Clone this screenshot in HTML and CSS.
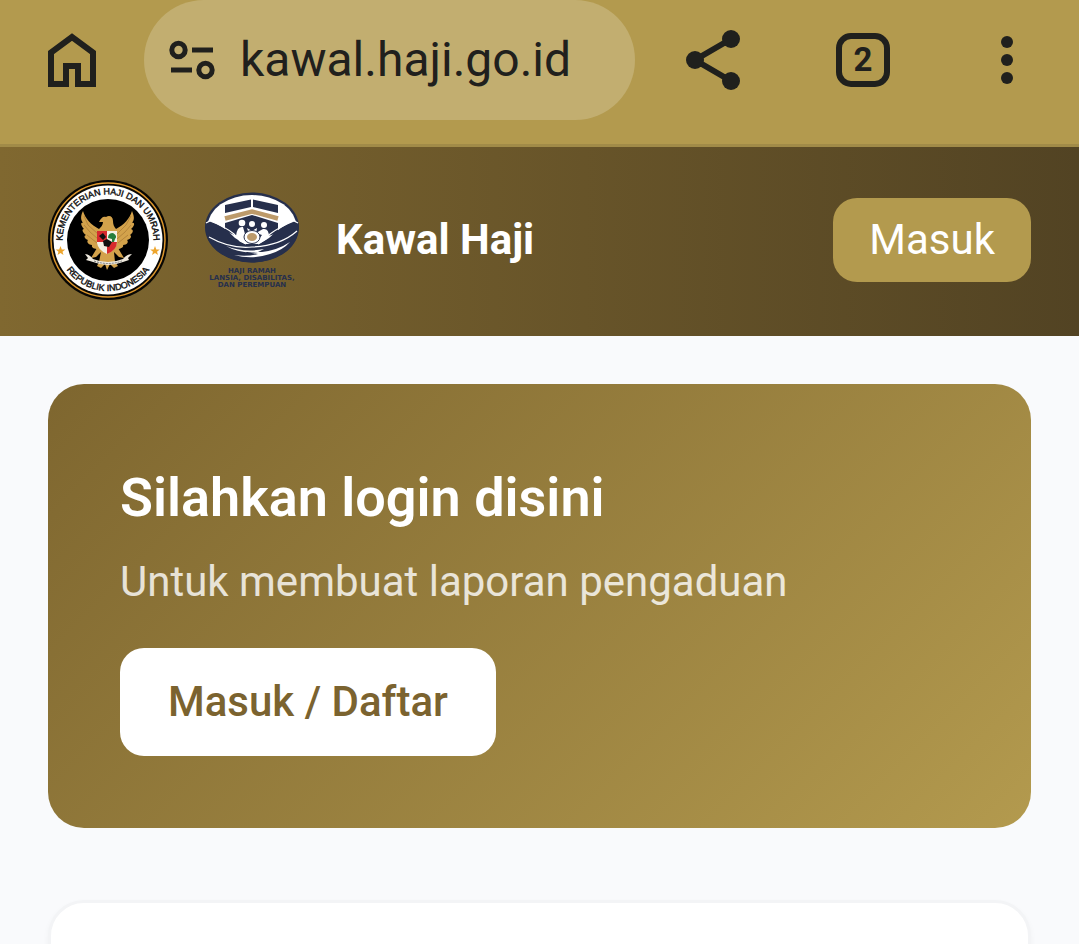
FILE: index.html
```html
<!DOCTYPE html>
<html lang="id">
<head>
<meta charset="utf-8">
<meta name="viewport" content="width=device-width, initial-scale=1">
<title>Kawal Haji</title>
<link rel="stylesheet" href="styles.css">
</head>
<body>
<div class="browser">
	<button class="tool" type="button" aria-label="Beranda">
		<svg width="72" height="72" viewBox="0 0 72 72"><path d="M15 60V28.500L36 13L57 28.500V60H42V42H30V60Z" fill="none" stroke="#20201d" stroke-width="6"/></svg>
	</button>
	<div class="omnibox">
		<button type="button" aria-label="Info situs">
			<svg width="48" height="48" viewBox="0 0 48 48" fill="none" stroke="#20201d" stroke-width="5">
				<circle cx="10.500" cy="14" r="6.700"/><path d="M24 14H45M3 34H24"/><circle cx="37.500" cy="34" r="6.700"/>
			</svg>
		</button>
		<input type="text" aria-label="Alamat" value="kawal.haji.go.id">
	</div>
	<button class="tool share" type="button" aria-label="Bagikan">
		<svg width="72" height="72" viewBox="0 0 72 72" fill="#20201d">
			<path d="M54 15L18 36L54 57" fill="none" stroke="#20201d" stroke-width="6"/>
			<circle cx="54" cy="15" r="9"/><circle cx="18" cy="36" r="9"/><circle cx="54" cy="57" r="9"/>
		</svg>
	</button>
	<button class="tool" type="button" aria-label="Tab"><span class="tabs">2</span></button>
	<button class="tool" type="button" aria-label="Menu">
		<svg width="72" height="72" viewBox="0 0 72 72" fill="#20201d"><circle cx="36" cy="18" r="6"/><circle cx="36" cy="36" r="6"/><circle cx="36" cy="54" r="6"/></svg>
	</button>
</div>

<header class="header">
	<svg class="logo" viewBox="0 0 120 120" role="img" aria-label="Kementerian Haji dan Umrah">
		<defs>
			<path id="arcTop" d="M14.500 70V60A45.500 45.500 0 0 1 105.500 60V70"/>
			<path id="arcBottom" d="M9 60A51 51 0 0 0 111 60"/>
			<path id="star" d="M0 -5L1.300 -1.600L4.800 -1.500L2 .700L3 4L0 2L-3 4L-2 .700L-4.800 -1.500L-1.300 -1.600Z"/>
		</defs>
		<circle cx="60" cy="60" r="60" fill="#080704"/>
		<circle cx="60" cy="60" r="57" fill="none" stroke="#dc962d" stroke-width="1.500"/>
		<circle cx="60" cy="60" r="54.500" fill="#fff"/>
		<circle cx="60" cy="60" r="41" fill="#000"/>
		<g class="ring">
			<text><textPath href="#arcTop" startOffset="50%" text-anchor="middle">KEMENTERIAN HAJI DAN UMRAH</textPath></text>
			<text><textPath href="#arcBottom" startOffset="50%" text-anchor="middle">REPUBLIK INDONESIA</textPath></text>
		</g>
		<use href="#star" x="12.500" y="71" fill="#eda52d"/>
		<use href="#star" x="107" y="71" fill="#eda52d"/>
		<!-- garuda -->
		<g fill="#d3a24b">
			<path d="M51 49C43 45 37 38 35 31C32 37 33 40 35 43C32 42 33 46 36 49C33 49 35 53 38 55C35 56 37 59 40 60C38 62 41 65 44 65C43 68 47 69 50 69L54 73H64L69 69C73 69 76 67 75 65C79 65 81 62 79 60C83 59 84 56 82 55C85 53 86 50 83 49C87 46 87 42 84 43C87 39 86 36 84 31C82 38 76 45 68 49C66 47 65 44 65 41C65 36 61 35 58 37C55 36 53 38 51 42L55 42C55 45 53 47 51 49Z"/>
			<path d="M49 68L43 78L48 77L53 72L51 82L49 86L53 88L57 84L59 90L62 84L66 88L70 86L67 82L66 72L71 77L76 78L70 68Z"/>
		</g>
		<path d="M36 36L40 45L50 54M36 45L42 52L50 59M39 55L49 63M83 36L78 45L69 54M83 45L77 52L69 59M80 55L70 63" fill="none" stroke="#b5853b"/>
		<path d="M49 51H69V63Q68 70 59 74Q50 70 49 63Z" fill="#f3efe3"/>
		<path d="M49 51H59V62H49ZM59 62H69Q69 70 59 74Z" fill="#d7292d"/>
		<path d="M60 58Q60 53 65 53Q70 56 67 59L66 62H64V59Z" fill="#267e3d"/>
		<path d="M51 56L55 53L58 57L55 60ZM55 61L59 59L64 62L61 67L56 66Z" fill="#111"/>
		<path d="M37 74Q41 74 45 79Q60 85 75 79Q79 74 84 74L80 78L81 80Q78 81 75 82Q60 88 45 82Q42 81 38 80L40 78Z" fill="#eee9de"/>
		<path d="M46 81Q60 86 74 81" fill="none" stroke="#777" stroke-dasharray="2 1"/>
	</svg>
	<svg class="logo" viewBox="0 0 120 120" role="img" aria-label="Haji ramah lansia, disabilitas, dan perempuan">
		<ellipse cx="60" cy="47.500" rx="47" ry="35" fill="#262f4c"/>
		<ellipse cx="60" cy="47" rx="44.500" ry="32" fill="#fff"/>
		<!-- kabah -->
		<path d="M33 25L59 19.500V27L33 33ZM61 19.500L86 25V33L61 27ZM33 43L60 35L86 43V53L73 57L60 59L45 56L33 51Z" fill="#262f4c"/>
		<path d="M33 38.500L60 31.500L86 38.500" fill="none" stroke="#bc9a6a" stroke-width="4.500"/>
		<!-- tangan -->
		<path d="M14 43L18 41Q32 46 43 58L53 64H67L77 58Q89 46 102 41L106 43Q109 58 95 71Q80 82.500 60 82.500Q40 82.500 25 71Q11 58 14 43Z" fill="#262f4c"/>
		<path d="M14 43L18 41Q32 46 42 54L48 61L54 64M66 64L74 59L78 54Q89 46 102 41L106 43M17 57Q38 69 60 67Q88 66 105 51" fill="none" stroke="#fff" stroke-width="1.200"/>
		<path d="M34 66Q52 73 72 69L66 72Q48 74 34 66ZM42 75Q60 80 78 74Q91 70 98 62Q86 70 70 72L54 72L66 74Q55 77 42 75Z" fill="#fff"/>
		<g fill="#fff">
			<circle cx="50" cy="43" r="3.300"/><circle cx="60" cy="44" r="3"/><circle cx="72" cy="45" r="3"/>
			<path d="M44 56Q45 46 51 47L53 54L55 57L52 60L48 58ZM77 57Q77 48 71 49L64 53L70 55L67 59L72 58ZM55 48L60 51L65 48L64 54H57Z"/>
		</g>
		<ellipse cx="60" cy="57" rx="8" ry="6.500" fill="#fff" stroke="#262f4c"/>
		<ellipse cx="60" cy="57" rx="5" ry="4" fill="#bc9a6a"/>
		<g class="caption">
			<text x="60" y="93">HAJI RAMAH</text>
			<text x="60" y="100">LANSIA, DISABILITAS,</text>
			<text x="60" y="107">DAN PEREMPUAN</text>
		</g>
	</svg>
	<h1>Kawal Haji</h1>
	<button class="login" type="button">Masuk</button>
</header>

<main>
	<section class="hero">
		<h2>Silahkan login disini</h2>
		<p>Untuk membuat laporan pengaduan</p>
		<a class="btn" href="#masuk">Masuk / Daftar</a>
	</section>
	<section class="card"></section>
</main>
</body>
</html>
```

FILE: styles.css
```css
*{box-sizing:border-box;}
body{margin:0;background:#f9fafc;font-family:Roboto, "Liberation Sans", sans-serif;font-size:42px;line-height:60px;}
button{padding:0;border:0;background:none;font:inherit;cursor:pointer;}
svg{display:block;flex:none;}
h1,h2,p{margin:0;}

/* browser bar */
.browser{display:flex;height:147px;background:#b39a4e;border-bottom:3px solid #a18b48;}
.tool{display:flex;flex:none;width:144px;height:120px;align-items:center;justify-content:center;}
.share{width:156px;}
.omnibox{display:flex;flex:1;min-width:0;height:120px;padding:0 24px;gap:24px;align-items:center;border-radius:60px;background:#c2ae70;}
.omnibox input{flex:1;width:0;min-width:0;height:72px;padding:0;border:0;outline:0;background:none;color:#20201d;font:48px/72px Roboto, sans-serif;}
.tabs{width:54px;height:54px;border:6px solid #20201d;border-radius:15px;color:#20201d;font:bold 33px/42px Roboto, sans-serif;}

/* header */
.header{display:flex;padding:33px 48px 36px;align-items:center;gap:24px;background:linear-gradient(90deg, #806830, #524323);}
.logo{width:120px;height:120px;}
.header h1{color:#fff;font-size:42px;line-height:60px;font-weight:700;}
.login{margin-left:auto;height:84px;padding:0 36px;border-radius:24px;background:#b39a4e;color:#fff;}
.ring text{font:9px "Liberation Sans", sans-serif;fill:#111;stroke:#111;stroke-width:.4;}
.caption text{font:bold 7px "DejaVu Sans", sans-serif;fill:#262f4c;text-anchor:middle;}

main{display:flex;flex-direction:column;padding:48px;gap:72px;}
.hero{padding:72px;border-radius:36px;background:linear-gradient(135deg, #7e662f, #b39a4e);color:#fff;}
.hero h2{margin-bottom:12px;font-size:54px;line-height:84px;font-weight:600;}
.hero p{margin-bottom:36px;opacity:.8;}
.btn{display:inline-block;padding:24px 48px;border-radius:24px;background:#fff;color:#7b632f;font-weight:500;text-decoration:none;vertical-align:top;}
.card{height:240px;border:3px solid #f3f4f6;border-radius:36px;background:#fff;box-shadow:0 3px 6px rgba(0,0,0,.04);}
```
